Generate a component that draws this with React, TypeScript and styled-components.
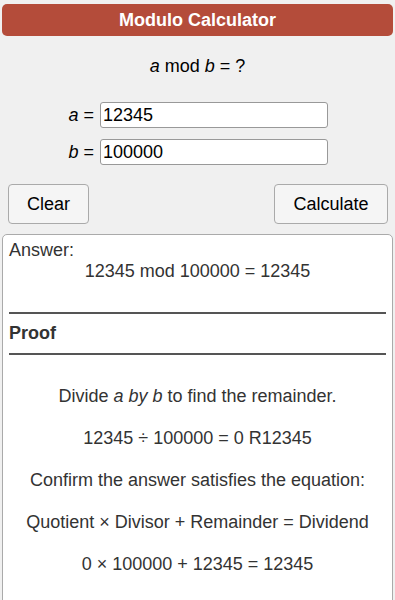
import React, { useState } from 'react';
import styled, { createGlobalStyle } from 'styled-components';

const GlobalStyle = createGlobalStyle`
  html, body {
    margin: 0;
    padding: 0;
    background: #f0f0f0;
    font-family: 'Liberation Sans', Arial, sans-serif;
  }
`;

function App() {
  const [a, setA] = useState('12345');
  const [b, setB] = useState('100000');

  return (
    <Page>
      <GlobalStyle />
      <Header>Modulo Calculator</Header>
      <Formula>
        <i>a</i> mod <i>b</i> = ?
      </Formula>

      <Fields>
        <Row>
          <Label>
            <i>a</i> =
          </Label>
          <Input value={a} onChange={(e) => setA(e.target.value)} />
        </Row>
        <Row>
          <Label>
            <i>b</i> =
          </Label>
          <Input value={b} onChange={(e) => setB(e.target.value)} />
        </Row>
      </Fields>

      <Buttons>
        <Button wide={false}>Clear</Button>
        <Button wide>Calculate</Button>
      </Buttons>

      <AnswerBox>
        <AnswerLabel>Answer:</AnswerLabel>
        <Result>12345 mod 100000 = 12345</Result>
        <Rule gap={30} />
        <ProofTitle>Proof</ProofTitle>
        <Rule gap={0} />
        <Steps>
          <Step>
            Divide <i>a by b</i> to find the remainder.
          </Step>
          <Step>12345 ÷ 100000 = 0 R12345</Step>
          <Step>Confirm the answer satisfies the equation:</Step>
          <Step>Quotient × Divisor + Remainder = Dividend</Step>
          <Step>0 × 100000 + 12345 = 12345</Step>
        </Steps>
      </AnswerBox>
    </Page>
  );
}

export default App;

const Page = styled.div`
  padding: 4px 2px 0 2px;
  color: #000;
`;

const Header = styled.div`
  height: 32px;
  line-height: 32px;
  background: #b44c3a;
  border-radius: 5px;
  color: #fff;
  font-weight: bold;
  font-size: 18px;
  text-align: center;
`;

const Formula = styled.div`
  text-align: center;
  font-size: 18px;
  margin-top: 20px;
  line-height: 21px;
`;

const Fields = styled.div`
  display: flex;
  flex-direction: column;
  gap: 11px;
  margin-top: 25px;
`;

const Row = styled.div`
  display: flex;
  align-items: center;
  gap: 6px;
`;

const Label = styled.div`
  width: 92px;
  text-align: right;
  font-size: 18px;
`;

const Input = styled.input`
  width: 228px;
  height: 26px;
  box-sizing: border-box;
  border: 1px solid #999;
  border-radius: 3px;
  padding: 0 2px;
  font-family: 'Liberation Sans', Arial, sans-serif;
  font-size: 18px;
  color: #000;
  background: #fff;
  outline: none;
`;

const Buttons = styled.div`
  display: flex;
  justify-content: space-between;
  padding: 0 5px 0 6px;
  margin-top: 19px;
`;

const Button = styled.button<{ wide: boolean }>`
  width: ${(p) => (p.wide ? '114px' : '81px')};
  height: 40px;
  box-sizing: border-box;
  border: 1px solid #aaa;
  border-radius: 4px;
  background: #f5f5f5;
  font-family: 'Liberation Sans', Arial, sans-serif;
  font-size: 18px;
  color: #000;
  cursor: pointer;
`;

const AnswerBox = styled.div`
  margin-top: 10px;
  width: 391px;
  box-sizing: border-box;
  background: #fff;
  border: 1px solid #aaa;
  border-radius: 5px;
  padding: 5px 6px 30px 6px;
  color: #333;
  font-size: 18px;
`;

const AnswerLabel = styled.div`
  line-height: 21px;
`;

const Result = styled.div`
  text-align: center;
  line-height: 21px;
`;

const Rule = styled.div<{ gap: number }>`
  height: 2px;
  background: #555;
  margin-top: ${(p) => p.gap}px;
`;

const ProofTitle = styled.div`
  font-weight: bold;
  line-height: 21px;
  margin: 9px 0;
`;

const Steps = styled.div`
  display: flex;
  flex-direction: column;
  gap: 21px;
  margin-top: 31px;
  text-align: center;
`;

const Step = styled.div`
  line-height: 21px;
`;
